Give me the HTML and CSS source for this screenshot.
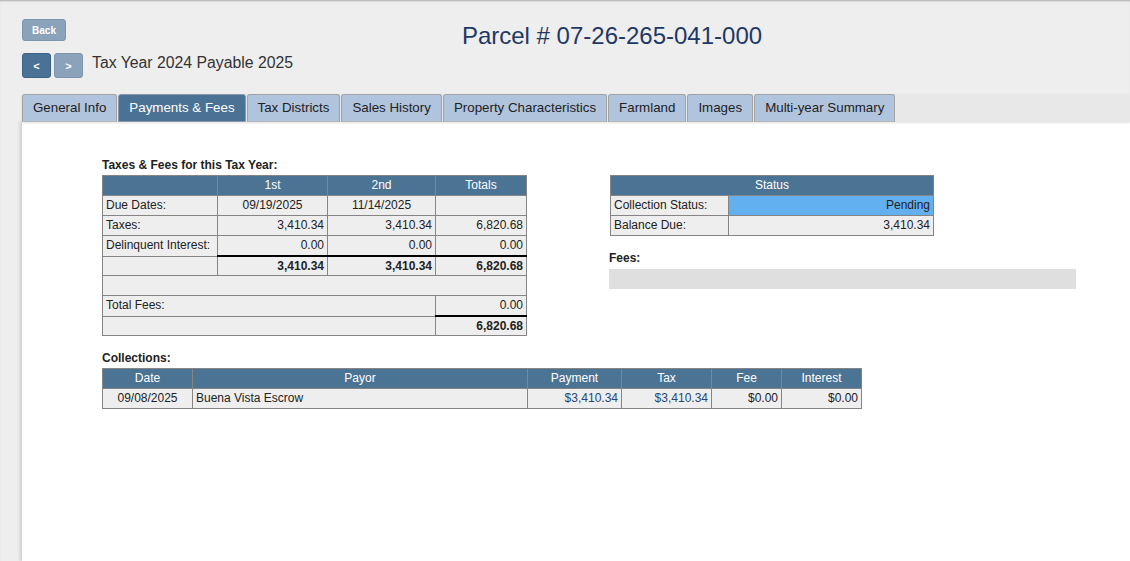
FILE: index.html
```html
<!DOCTYPE html>
<html lang="en">
<head>
<meta charset="utf-8">
<title>Parcel # 07-26-265-041-000</title>
<link rel="stylesheet" href="styles.css">
</head>
<body>
<header class="top">
  <div class="row1">
    <button class="btn back" type="button">Back</button>
    <h1 class="parcel">Parcel # 07-26-265-041-000</h1>
  </div>
  <div class="row2">
    <button class="btn nav prev" type="button">&lt;</button>
    <button class="btn nav next" type="button">&gt;</button>
    <span class="year">Tax Year 2024 Payable 2025</span>
  </div>
</header>

<nav class="tabbar">
  <a class="tab">General Info</a>
  <a class="tab active">Payments &amp; Fees</a>
  <a class="tab">Tax Districts</a>
  <a class="tab">Sales History</a>
  <a class="tab">Property Characteristics</a>
  <a class="tab">Farmland</a>
  <a class="tab">Images</a>
  <a class="tab">Multi-year Summary</a>
</nav>

<main class="panel">
  <div class="cols">
    <section class="left">
      <div class="label">Taxes &amp; Fees for this Tax Year:</div>
      <table class="grid taxes">
        <colgroup><col class="c-lab"><col class="c-1"><col class="c-2"><col class="c-t"></colgroup>
        <tr class="head"><th></th><th>1st</th><th>2nd</th><th>Totals</th></tr>
        <tr><td>Due Dates:</td><td class="ctr">09/19/2025</td><td class="ctr">11/14/2025</td><td></td></tr>
        <tr><td>Taxes:</td><td class="num">3,410.34</td><td class="num">3,410.34</td><td class="num">6,820.68</td></tr>
        <tr><td>Delinquent Interest:</td><td class="num">0.00</td><td class="num">0.00</td><td class="num">0.00</td></tr>
        <tr class="sum"><td></td><td class="num b thick">3,410.34</td><td class="num b thick">3,410.34</td><td class="num b thick">6,820.68</td></tr>
        <tr><td colspan="4">&nbsp;</td></tr>
        <tr><td colspan="3">Total Fees:</td><td class="num">0.00</td></tr>
        <tr class="sum"><td colspan="3"></td><td class="num b thick">6,820.68</td></tr>
      </table>
    </section>

    <section class="right">
      <table class="grid status">
        <colgroup><col class="s-lab"><col class="s-val"></colgroup>
        <tr class="head"><th colspan="2">Status</th></tr>
        <tr><td>Collection Status:</td><td class="num pending">Pending</td></tr>
        <tr><td>Balance Due:</td><td class="num">3,410.34</td></tr>
      </table>
      <div class="label fees-label">Fees:</div>
      <div class="fees-bar"></div>
    </section>
  </div>

  <div class="label coll-label">Collections:</div>
  <table class="grid coll">
    <colgroup><col class="k-date"><col class="k-payor"><col class="k-pay"><col class="k-tax"><col class="k-fee"><col class="k-int"></colgroup>
    <tr class="head"><th>Date</th><th>Payor</th><th>Payment</th><th>Tax</th><th>Fee</th><th>Interest</th></tr>
    <tr><td class="ctr">09/08/2025</td><td>Buena Vista Escrow</td><td class="num money">$3,410.34</td><td class="num money">$3,410.34</td><td class="num">$0.00</td><td class="num">$0.00</td></tr>
  </table>
</main>
</body>
</html>
```

FILE: styles.css
```css
html, body {
  margin: 0;
  padding: 0;
}

body {
  background: #eeeeee;
  font-family: "Liberation Sans", Arial, sans-serif;
  color: #222;
  box-shadow: inset 0 2px 2px -1px rgba(0, 0, 0, 0.28);
  overflow: hidden;
}

.top {
  padding: 19px 0 0 22px;
}

.row1 {
  display: flex;
  align-items: flex-start;
}

.btn {
  font-family: "Liberation Sans", Arial, sans-serif;
  color: #fff;
  border: 1px solid #7d96ae;
  border-radius: 3px;
  background: #8aa3bb;
  padding: 0;
  cursor: pointer;
}

.back {
  width: 44px;
  height: 22px;
  font-size: 10px;
  font-weight: bold;
}

.parcel {
  flex: 1;
  margin: 3px 0 0;
  padding-left: 28px;
  text-align: center;
  font-size: 24px;
  line-height: 28px;
  font-weight: normal;
  color: #1f3864;
}

.row2 {
  display: flex;
  align-items: center;
  gap: 3px;
  margin-top: 3px;
}

.nav {
  width: 29px;
  height: 25px;
  font-size: 11px;
  font-weight: bold;
}

.prev {
  background: #4a7196;
  border-color: #3d6288;
}

.year {
  margin-left: 6px;
  font-size: 15.8px;
  color: #333;
  line-height: 20px;
  margin-top: -5px;
}

.tabbar {
  display: flex;
  gap: 1px;
  margin: 16px 0 0 22px;
  height: 28px;
  background: #e8e8e8;
  position: relative;
  z-index: 1;
  box-shadow: 0 1px 2px rgba(0, 0, 0, 0.12);
}

.tab {
  box-sizing: border-box;
  height: 28px;
  padding: 5px 10px 0;
  border: 1px solid #a3a3a3;
  border-bottom-color: #b8b8b8;
  border-radius: 3px 3px 0 0;
  background: #b0c4de;
  font-size: 13.33px;
  line-height: 16px;
  color: #222;
  white-space: nowrap;
}

.tab.active {
  background: #4a7294;
  color: #fff;
  border-color: #8a9aaa;
}

.panel {
  display: block;
  box-sizing: border-box;
  margin-left: 22px;
  background: #fff;
  min-height: 439px;
  padding: 36px 0 20px 80px;
  box-shadow: -2px 0 3px rgba(0, 0, 0, 0.14);
}

.cols {
  display: flex;
  align-items: flex-start;
}

.left {
  width: 425px;
}

.right {
  margin-left: 82px;
  padding-top: 17px;
  width: 467px;
}

.label {
  font-size: 12px;
  font-weight: bold;
  line-height: 15px;
  color: #222;
  margin-bottom: 2px;
}

.grid {
  border-collapse: collapse;
  table-layout: fixed;
  font-size: 12px;
  color: #222;
}

.grid th,
.grid td {
  border: 1px solid #858585;
  padding: 1px 3px 1px;
  line-height: 17px;
  height: 17px;
  background: #eeeeee;
  white-space: nowrap;
  overflow: hidden;
}

.grid .head th {
  background: #4b7394;
  color: #fff;
  font-weight: normal;
  text-align: center;
}

.grid td.num {
  text-align: right;
}

.grid td.ctr {
  text-align: center;
}

.grid td.b {
  font-weight: bold;
}

.grid td.thick {
  border-top: 2px solid #000;
}

.grid tr.sum td {
  padding-bottom: 0;
}

.taxes { width: 425px; }
.c-lab { width: 115px; }
.c-1 { width: 110px; }
.c-2 { width: 108px; }
.c-t { width: 91px; }

.status {
  width: 324px;
  margin-left: 1px;
}
.s-lab { width: 118px; }
.s-val { width: 205px; }

.grid td.pending {
  background: #62b0f0;
}

.fees-label {
  margin-top: 15px;
  margin-bottom: 3px;
}

.fees-bar {
  height: 20px;
  background: #dfdfdf;
}

.coll-label {
  margin-top: 15px;
}

.coll { width: 760px; }
.k-date { width: 90px; }
.k-payor { width: 335px; }
.k-pay { width: 94px; }
.k-tax { width: 90px; }
.k-fee { width: 70px; }
.k-int { width: 80px; }

.grid td.money {
  color: #24457a;
}
```
